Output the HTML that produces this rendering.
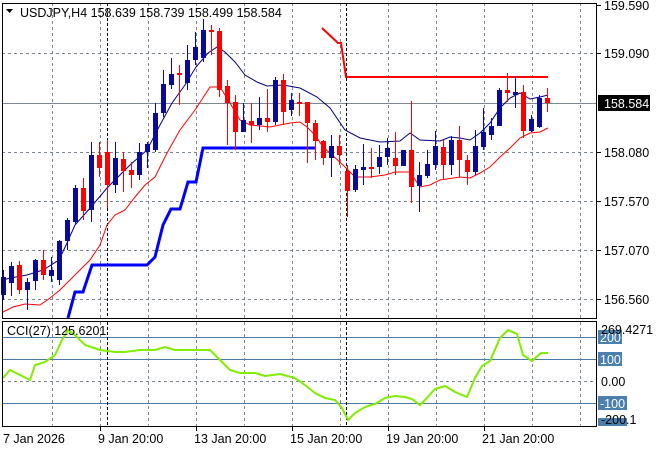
<!DOCTYPE html>
<html><head><meta charset="utf-8"><style>
html,body{margin:0;padding:0;background:#fff;}
svg{display:block;font-family:"Liberation Sans",sans-serif;font-size:12.5px;}
</style></head><body>
<svg width="660" height="450" viewBox="0 0 660 450" xmlns="http://www.w3.org/2000/svg">
<rect width="660" height="450" fill="#fff"/>
<g stroke="#7a8592" stroke-width="1" stroke-dasharray="3,3">
<path d="M52.5 3V318M100.5 3V318M148.5 3V318M196.5 3V318M244.5 3V318M292.5 3V318M340.5 3V318M388.5 3V318M436.5 3V318M484.5 3V318M532.5 3V318M580.5 3V318"/>
<path d="M2 53.5H597M2 152.5H597M2 201.5H597M2 250.5H597M2 299.5H597"/>
<path d="M52.5 322V426M100.5 322V426M148.5 322V426M196.5 322V426M244.5 322V426M292.5 322V426M340.5 322V426M388.5 322V426M436.5 322V426M484.5 322V426M532.5 322V426M580.5 322V426"/>
<path d="M2 381.5H597"/>
</g>
<path d="M2 103.5H597" stroke="#7f8790" stroke-width="1"/>
<g stroke="#4a7aa8" stroke-width="1"><path d="M2 337.5H597M2 359.5H597M2 403.5H597"/></g>
<g stroke="#000" stroke-width="1" stroke-dasharray="3,2"><path d="M107.5 3V318M346.5 3V318M107.5 322V426M346.5 322V426"/></g>
<polyline fill="none" stroke="#0000ff" stroke-width="3" points="68,318 75,292 83,292 92,265 147,265 155,257 163,225 171,209 180,209 188,182 196,182 203,148 315,148"/>
<polyline fill="none" stroke="#ff0000" stroke-width="2" points="322,28 338,43 341,43 346,77 548,77"/>
<polyline fill="none" stroke="#ff0000" stroke-width="1" points="3,312 13,307 25,304 40,305 50,298 60,290 70,280 80,270 90,260 100,245 107,225 115,215 125,210 135,197 145,185 155,177 167,153 180,130 195,110 210,87 220,87 230,103 240,120 250,125 270,127 280,125 290,123 300,122 307,127 315,135 323,147 330,153 345,167 355,177 370,177 385,175 395,172 410,172 420,187 430,185 440,180 460,177 470,178 480,173 490,167 500,157 510,148 520,138 530,133 540,132 548,128"/>
<polyline fill="none" stroke="#000080" stroke-width="1" points="3,280 10,278 27,275 43,270 59,260 67,243 75,225 91,207 107,188 130,165 147,150 160,125 172,103 185,85 196,67 208,53 217,47 225,52 235,62 245,75 257,82 267,86 283,85 300,88 317,97 330,108 345,130 360,138 380,142 400,141 410,133 420,140 440,141 450,137 460,138 470,140 480,133 490,123 500,108 510,98 520,93 530,99 540,97 548,95"/>
<g>
<g stroke="#0000ee" stroke-width="1">
<path d="M3.5 270V300M11.5 262V296M27.5 278V310M35.5 259V290M51.5 257V282M59.5 240V285M67.5 218V250M75.5 185V225M91.5 142V222M115.5 142V193M139.5 143V180M147.5 142V168M155.5 103V152M163.5 70V117M171.5 58V89M187.5 45V90M195.5 32V65M203.5 19V62M243.5 103V132M259.5 97V130M275.5 77V125M291.5 93V116M331.5 135V177M355.5 165V192M363.5 144V185M379.5 145V174M387.5 138V165M403.5 150V166M419.5 162V212M427.5 150V178M435.5 131V170M451.5 136V175M475.5 130V175M483.5 108V150M491.5 118V140M499.5 88V126M515.5 76V108M531.5 115V132M539.5 95V128"/>
</g>
<g fill="#0a0a9a">
<rect x="1" y="277" width="5" height="18"/><rect x="9" y="266" width="5" height="17"/><rect x="25" y="282" width="5" height="8"/><rect x="33" y="260" width="5" height="21"/><rect x="49" y="270" width="5" height="6"/><rect x="57" y="241" width="5" height="39"/><rect x="65" y="220" width="5" height="21"/><rect x="73" y="188" width="5" height="34"/><rect x="89" y="155" width="5" height="55"/><rect x="113" y="158" width="5" height="27"/><rect x="137" y="152" width="5" height="23"/><rect x="145" y="144" width="5" height="8"/><rect x="153" y="113" width="5" height="37"/><rect x="161" y="84" width="5" height="29"/><rect x="169" y="74" width="5" height="11"/><rect x="185" y="60" width="5" height="23"/><rect x="193" y="47" width="5" height="13"/><rect x="201" y="30" width="5" height="28"/><rect x="241" y="120" width="5" height="12"/><rect x="257" y="118" width="5" height="7"/><rect x="273" y="80" width="5" height="42"/><rect x="289" y="100" width="5" height="10"/><rect x="329" y="146" width="5" height="12"/><rect x="353" y="169" width="5" height="21"/><rect x="361" y="167" width="5" height="3"/><rect x="377" y="157" width="5" height="10"/><rect x="385" y="148" width="5" height="9"/><rect x="401" y="150" width="5" height="16"/><rect x="417" y="175" width="5" height="11"/><rect x="425" y="164" width="5" height="12"/><rect x="433" y="146" width="5" height="19"/><rect x="449" y="140" width="5" height="25"/><rect x="473" y="146" width="5" height="26"/><rect x="481" y="132" width="5" height="15"/><rect x="489" y="126" width="5" height="9"/><rect x="497" y="90" width="5" height="36"/><rect x="513" y="92" width="5" height="3"/><rect x="529" y="119" width="5" height="12"/><rect x="537" y="98" width="5" height="29"/>
</g>
<g stroke="#ff0000" stroke-width="1">
<path d="M19.5 261V294M43.5 250V280M83.5 178V220M99.5 142V177M107.5 140V208M123.5 152V192M131.5 162V188M179.5 65V105M211.5 25V55M219.5 28V97M227.5 80V145M235.5 95V150M251.5 103V143M267.5 89V132M283.5 74V125M299.5 93V116M307.5 102V163M315.5 120V160M323.5 140V165M339.5 135V165M347.5 165V217M371.5 148V178M395.5 132V175M411.5 101V203M443.5 140V180M459.5 126V177M467.5 155V185M507.5 73V102M523.5 85V138M547.5 88V112"/>
</g>
<g fill="#ff0000">
<rect x="17" y="265" width="5" height="25"/><rect x="41" y="260" width="5" height="15"/><rect x="81" y="188" width="5" height="23"/><rect x="97" y="155" width="5" height="13"/><rect x="105" y="152" width="5" height="33"/><rect x="121" y="159" width="5" height="12"/><rect x="129" y="170" width="5" height="5"/><rect x="177" y="73" width="5" height="2"/><rect x="209" y="30" width="5" height="2"/><rect x="217" y="31" width="5" height="59"/><rect x="225" y="86" width="5" height="17"/><rect x="233" y="102" width="5" height="30"/><rect x="249" y="121" width="5" height="4"/><rect x="265" y="118" width="5" height="4"/><rect x="281" y="80" width="5" height="32"/><rect x="297" y="102" width="5" height="2"/><rect x="305" y="102" width="5" height="21"/><rect x="313" y="123" width="5" height="18"/><rect x="321" y="141" width="5" height="17"/><rect x="337" y="146" width="5" height="9"/><rect x="345" y="171" width="5" height="20"/><rect x="369" y="167" width="5" height="2"/><rect x="393" y="158" width="5" height="8"/><rect x="409" y="150" width="5" height="37"/><rect x="441" y="147" width="5" height="18"/><rect x="457" y="140" width="5" height="20"/><rect x="465" y="160" width="5" height="12"/><rect x="505" y="90" width="5" height="3"/><rect x="521" y="92" width="5" height="39"/><rect x="545" y="98" width="5" height="5"/>
</g>
</g>
<polyline fill="none" stroke="#7fee00" stroke-width="2" points="3,378 10,370 20,375 30,380 35,365 45,362 55,355 62,340 68,330 75,335 85,345 100,350 115,352 125,352 140,350 155,350 165,347 175,350 195,350 210,350 220,360 230,370 240,373 255,373 265,376 280,374 295,378 305,385 315,393 325,398 335,400 342,408 348,420 355,413 365,407 375,404 385,398 395,396 405,397 412,399 420,405 425,400 435,389 445,386 455,392 467,397 475,378 482,366 490,361 500,338 508,330 517,334 523,355 532,361 541,353 548,353"/>
<rect x="2.5" y="3.5" width="594" height="315" fill="none" stroke="#000"/>
<rect x="2.5" y="321.5" width="594" height="105" fill="none" stroke="#000"/>
<g stroke="#000"><path d="M597 5.5H601M597 53.5H601M597 152.5H601M597 201.5H601M597 250.5H601M597 299.5H601M100.5 427V431M196.5 427V431M292.5 427V431M388.5 427V431M484.5 427V431"/></g>
<g fill="#000">
<text x="604" y="10">159.590</text>
<text x="604" y="58">159.090</text>
<text x="604" y="157">158.080</text>
<text x="604" y="206">157.570</text>
<text x="604" y="255">157.070</text>
<text x="604" y="304">156.560</text>
</g>
<rect x="598" y="95" width="52" height="16" fill="#000"/>
<text x="604" y="108" fill="#fff">158.584</text>
<g fill="#4a7fb0">
<rect x="598" y="330" width="24" height="14"/>
<rect x="598" y="352" width="24" height="14"/>
<rect x="598" y="396" width="29" height="14"/>
<rect x="598" y="418" width="29" height="8"/>
</g>
<g fill="#fff"><text x="600" y="342">200</text><text x="600" y="364">100</text><text x="600" y="408">-100</text></g>
<g fill="#000"><text x="601" y="334">269.4271</text><text x="601" y="386">0.00</text><text x="601" y="424">-200.1</text></g>
<path d="M6 9H13L9.5 13Z" fill="#000"/>
<text x="20" y="17" fill="#000">USDJPY,H4  158.639 158.739 158.499 158.584</text>
<text x="7" y="335" fill="#000">CCI(27) 125.6201</text>
<g fill="#000">
<text x="3" y="443">7 Jan 2026</text>
<text x="98" y="443">9 Jan 20:00</text>
<text x="194" y="443">13 Jan 20:00</text>
<text x="290" y="443">15 Jan 20:00</text>
<text x="386" y="443">19 Jan 20:00</text>
<text x="482" y="443">21 Jan 20:00</text>
</g>
</svg>
</body></html>
